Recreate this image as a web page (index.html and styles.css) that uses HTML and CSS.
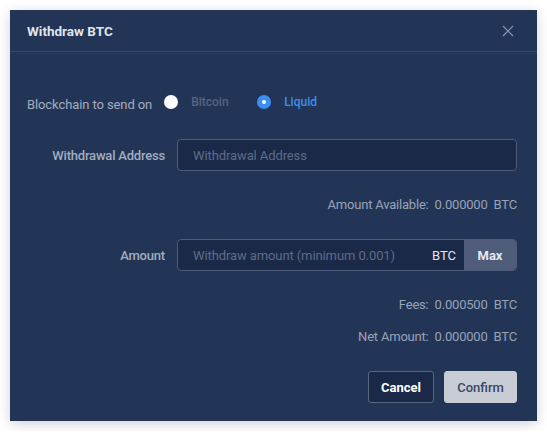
FILE: index.html
```html
<!DOCTYPE html>
<html>
<head>
<meta charset="utf-8">
<link rel="stylesheet" href="styles.css">
</head>
<body>
<div class="modal">
  <div class="modal-header">
    <span class="modal-title">Withdraw BTC</span>
    <svg class="close" width="12" height="12" viewBox="0 0 12 12"><path d="M1 1L11 11M11 1L1 11" stroke="#8a97ad" stroke-width="1.2" fill="none"/></svg>
  </div>
  <div class="modal-body">
    <div class="chain-row">
      <span class="chain-label">Blockchain to send on</span>
      <label class="radio"><span class="dot dot-off"></span><span class="radio-text off">Bitcoin</span></label>
      <label class="radio"><span class="dot dot-on"></span><span class="radio-text on">Liquid</span></label>
    </div>
    <div class="field-row address-row">
      <span class="field-label">Withdrawal Address</span>
      <div class="input"><span class="placeholder">Withdrawal Address</span></div>
    </div>
    <div class="info available">Amount Available:&nbsp; 0.000000&nbsp; BTC</div>
    <div class="field-row amount-row">
      <span class="field-label">Amount</span>
      <div class="input amount-input">
        <span class="placeholder">Withdraw amount (minimum 0.001)</span>
        <span class="unit">BTC</span>
        <span class="max">Max</span>
      </div>
    </div>
    <div class="info fees">Fees:&nbsp; 0.000500&nbsp; BTC</div>
    <div class="info net">Net Amount:&nbsp; 0.000000&nbsp; BTC</div>
    <div class="actions">
      <button class="btn btn-cancel">Cancel</button>
      <button class="btn btn-confirm">Confirm</button>
    </div>
  </div>
</div>
</body>
</html>
```
FILE: styles.css
```css
html, body {
  margin: 0;
  padding: 0;
  background: #ffffff;
}
body {
  padding: 10px;
  font-family: Roboto, "Liberation Sans", sans-serif;
  font-size: 13px;
}
.modal {
  width: 527px;
  height: 411px;
  background: #233556;
  box-shadow: 0 3px 12px rgba(0, 0, 0, 0.18);
  display: flex;
  flex-direction: column;
}
.modal-header {
  height: 41px;
  border-bottom: 1px solid #33476a;
  display: flex;
  align-items: center;
  justify-content: space-between;
  padding: 0 23px 0 17px;
}
.modal-title {
  color: #dfe4ec;
  font-weight: 700;
  font-size: 13.5px;
}
.close {
  display: block;
}
.modal-body {
  padding: 0 20px 0 17px;
  display: flex;
  flex-direction: column;
}
.chain-row {
  margin-top: 40px;
  height: 20px;
  display: flex;
  align-items: center;
}
.chain-label {
  color: #a2adbf;
  margin-right: 12px;
  position: relative;
  top: 2px;
  letter-spacing: -0.1px;
}
.radio {
  display: flex;
  align-items: center;
  margin-right: 11px;
}
.dot {
  width: 14px;
  height: 14px;
  border-radius: 50%;
  box-sizing: border-box;
  margin-right: 13px;
}
.dot-off {
  background: #ffffff;
}
.dot-on {
  background: #3d8ef2;
  display: flex;
  align-items: center;
  justify-content: center;
}
.dot-on::after {
  content: "";
  width: 4px;
  height: 4px;
  border-radius: 50%;
  background: #ffffff;
}
.radio-text {
  font-size: 12px;
  font-weight: 500;
  width: 55px;
}
.radio-text.off {
  color: #56647e;
}
.radio-text.on {
  color: #3f8ff0;
}
.field-row {
  display: flex;
  align-items: center;
}
.address-row {
  margin-top: 27px;
}
.field-label {
  width: 138px;
  text-align: right;
  color: #a2adbf;
  font-weight: 500;
  margin-right: 12px;
  letter-spacing: -0.2px;
}
.input {
  flex: 1;
  height: 32px;
  box-sizing: border-box;
  border: 1px solid #4b5b79;
  border-radius: 4px;
  background: #1b2949;
  display: flex;
  align-items: center;
  padding-left: 15px;
}
.placeholder {
  color: #5e6c86;
  flex: 1;
  letter-spacing: -0.1px;
}
.amount-input {
  padding-right: 0;
  overflow: hidden;
}
.unit {
  color: #e3e7ee;
  margin-right: 8px;
}
.max {
  align-self: stretch;
  width: 52px;
  background: #4f5d7a;
  color: #e6e9ef;
  font-weight: 700;
  display: flex;
  align-items: center;
  justify-content: center;
}
.info {
  text-align: right;
  color: #98a3b7;
  line-height: 16px;
  letter-spacing: -0.2px;
}
.available {
  margin-top: 26px;
}
.amount-row {
  margin-top: 26px;
}
.fees {
  margin-top: 26px;
}
.net {
  margin-top: 16px;
}
.actions {
  margin-top: 26px;
  display: flex;
  justify-content: flex-end;
  gap: 10px;
}
.btn {
  height: 32px;
  box-sizing: border-box;
  border-radius: 3px;
  font-family: Roboto, "Liberation Sans", sans-serif;
  font-size: 13px;
  font-weight: 700;
  padding: 0;
}
.btn-cancel {
  width: 66px;
  background: #1b2949;
  border: 1px solid #5b6781;
  color: #ffffff;
}
.btn-confirm {
  width: 73px;
  background: #c8ccd5;
  border: 1px solid #c8ccd5;
  color: #3a4763;
  font-weight: 500;
}
```
